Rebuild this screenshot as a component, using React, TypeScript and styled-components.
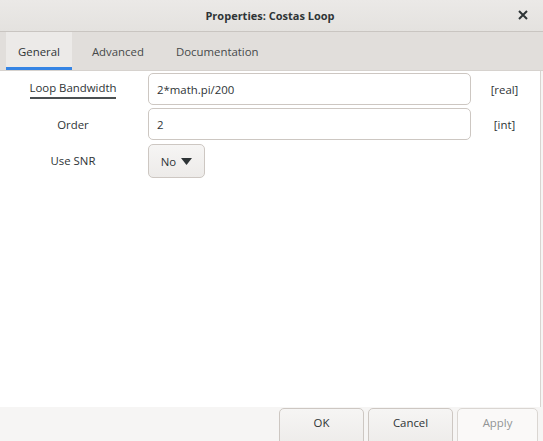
import React from 'react';
import styled, { createGlobalStyle } from 'styled-components';

const GlobalStyle = createGlobalStyle`
  html, body {
    margin: 0;
    padding: 0;
    background: #f6f5f4;
  }
  body {
    font-family: "Open Sans", "Noto Sans", sans-serif;
    color: #2e3436;
  }
`;

const Window = styled.div`
  width: 543px;
  height: 441px;
  display: flex;
  flex-direction: column;
  overflow: hidden;
  background: #f6f5f4;
`;

const TitleBar = styled.div`
  height: 31px;
  flex: none;
  display: flex;
  align-items: center;
  justify-content: center;
  position: relative;
  background: linear-gradient(#ebe9e7, #e4e2df);
  border-bottom: 1px solid #c9c5c1;
`;

const Title = styled.div`
  font-size: 11px;
  font-weight: 700;
  color: #2e3436;
  margin-left: -3px;
`;

const CloseButton = styled.div`
  position: absolute;
  right: 12px;
  top: 7px;
  width: 16px;
  height: 16px;
  display: flex;
  align-items: center;
  justify-content: center;
`;

const TabBar = styled.div`
  height: 38px;
  flex: none;
  display: flex;
  gap: 8px;
  padding-left: 6px;
  background: #e1dedb;
  border-bottom: 1px solid #d6d2ce;
`;

const Tab = styled.div<{ $active?: boolean }>`
  padding: 3px 12px 0;
  display: flex;
  align-items: center;
  font-size: 11.4px;
  color: ${p => (p.$active ? '#2e3436' : '#46494a')};
  background: ${p => (p.$active ? '#eceae8' : 'transparent')};
  border-bottom: 3px solid ${p => (p.$active ? '#3584e4' : 'transparent')};
`;

const Content = styled.div`
  flex: 1;
  background: #ffffff;
  margin-right: 2px;
  border-right: 1px solid #d8d4d0;
  padding-top: 2px;
`;

const Form = styled.div`
  display: grid;
  grid-template-columns: 148px 323px 1fr;
  row-gap: 3px;
  align-items: center;
`;

const Label = styled.div<{ $focused?: boolean }>`
  justify-self: center;
  font-size: 11.4px;
  color: #2e3436;
  padding-bottom: ${p => (p.$focused ? '2px' : '0')};
  border-bottom: ${p => (p.$focused ? '2px solid #4a4f51' : 'none')};
  margin-left: -2px;
`;

const Entry = styled.div`
  height: 32px;
  box-sizing: border-box;
  border: 1px solid #cdc7c2;
  border-radius: 5px;
  background: #fff;
  display: flex;
  align-items: center;
  padding-left: 8px;
  font-size: 11.4px;
  color: #2e3436;
`;

const Unit = styled.div`
  justify-self: center;
  font-size: 11.4px;
  color: #2e3436;
  margin-left: -2px;
`;

const Combo = styled.div`
  width: 57px;
  height: 34px;
  box-sizing: border-box;
  border: 1px solid #cdc7c2;
  border-radius: 5px;
  background: linear-gradient(#f6f5f4, #edebe9);
  display: flex;
  align-items: center;
  justify-content: center;
  gap: 5px;
  font-size: 11.4px;
  color: #2e3436;
  margin-top: 1px;
`;

const ButtonBar = styled.div`
  height: 34px;
  flex: none;
  display: flex;
  justify-content: flex-end;
  gap: 4px;
  padding-right: 5px;
  background: #f6f5f4;
  overflow: hidden;
`;

const Button = styled.div<{ $width: number; $disabled?: boolean }>`
  width: ${p => p.$width}px;
  height: 40px;
  box-sizing: border-box;
  border: 1px solid ${p => (p.$disabled ? '#dad6d2' : '#cdc7c2')};
  border-radius: 5px;
  background: ${p => (p.$disabled ? '#faf9f8' : 'linear-gradient(#f6f5f4, #edebe9)')};
  display: flex;
  justify-content: center;
  padding-top: 6px;
  font-size: 11.4px;
  color: ${p => (p.$disabled ? '#929595' : '#2e3436')};
  margin-top: 1px;
`;

const App: React.FC = () => {
  return (
    <Window>
      <GlobalStyle />
      <TitleBar>
        <Title>Properties: Costas Loop</Title>
        <CloseButton>
          <svg width="10" height="10" viewBox="0 0 10 10">
            <path d="M1 1 L9 9 M9 1 L1 9" stroke="#2e3436" strokeWidth="2" />
          </svg>
        </CloseButton>
      </TitleBar>
      <TabBar>
        <Tab $active>General</Tab>
        <Tab>Advanced</Tab>
        <Tab>Documentation</Tab>
      </TabBar>
      <Content>
        <Form>
          <Label $focused>Loop Bandwidth</Label>
          <Entry>2*math.pi/200</Entry>
          <Unit>[real]</Unit>

          <Label>Order</Label>
          <Entry>2</Entry>
          <Unit>[int]</Unit>

          <Label>Use SNR</Label>
          <div>
            <Combo>
              No
              <svg width="11" height="7" viewBox="0 0 11 7">
                <path d="M0 0 L11 0 L5.5 7 Z" fill="#2e3436" />
              </svg>
            </Combo>
          </div>
          <div />
        </Form>
      </Content>
      <ButtonBar>
        <Button $width={85}>OK</Button>
        <Button $width={85}>Cancel</Button>
        <Button $width={81} $disabled>Apply</Button>
      </ButtonBar>
    </Window>
  );
};

export default App;
